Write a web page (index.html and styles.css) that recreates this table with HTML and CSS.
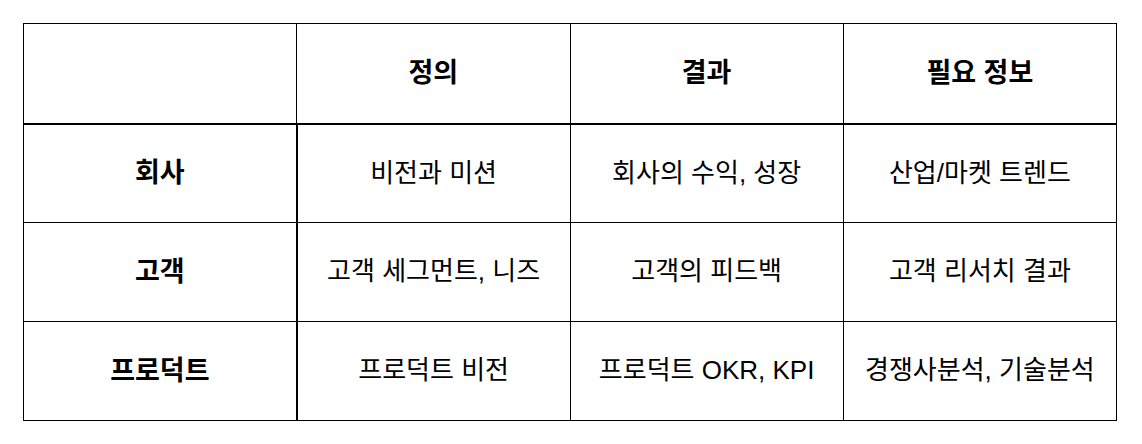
FILE: index.html
```html
<!DOCTYPE html>
<html lang="ko">
<head>
<meta charset="utf-8">
<link rel="stylesheet" href="styles.css">
</head>
<body>
<table class="grid">
  <thead>
    <tr class="head">
      <th class="corner"></th>
      <th>정의</th>
      <th>결과</th>
      <th>필요 정보</th>
    </tr>
  </thead>
  <tbody>
    <tr>
      <th class="rowhead">회사</th>
      <td>비전과 미션</td>
      <td>회사의 수익, 성장</td>
      <td>산업/마켓 트렌드</td>
    </tr>
    <tr>
      <th class="rowhead">고객</th>
      <td>고객 세그먼트, 니즈</td>
      <td>고객의 피드백</td>
      <td>고객 리서치 결과</td>
    </tr>
    <tr>
      <th class="rowhead">프로덕트</th>
      <td>프로덕트 비전</td>
      <td>프로덕트 OKR, KPI</td>
      <td>경쟁사분석, 기술분석</td>
    </tr>
  </tbody>
</table>
</body>
</html>
```
FILE: styles.css
```css
html, body {
  margin: 0;
  padding: 0;
  background: #ffffff;
}
body {
  padding: 23px 0 0 23px;
  font-family: "Liberation Sans", "Noto Sans CJK KR", sans-serif;
  color: #000000;
}
.grid {
  border-collapse: collapse;
  table-layout: fixed;
  width: 1094px;
  border: 1px solid #000;
}
.grid th, .grid td {
  border: 1px solid #000;
  text-align: center;
  vertical-align: middle;
  padding: 0;
  font-size: 26px;
  line-height: 1.2;
}
.grid th {
  font-weight: bold;
  font-size: 27px;
}
.grid td {
  font-weight: normal;
}
.grid tr {
  height: 99px;
}
.grid tr.head {
  height: 100px;
}
.grid tr.head th {
  border-bottom: 2px solid #000;
}
.grid tbody th.rowhead {
  border-right: 2px solid #000;
}
```
